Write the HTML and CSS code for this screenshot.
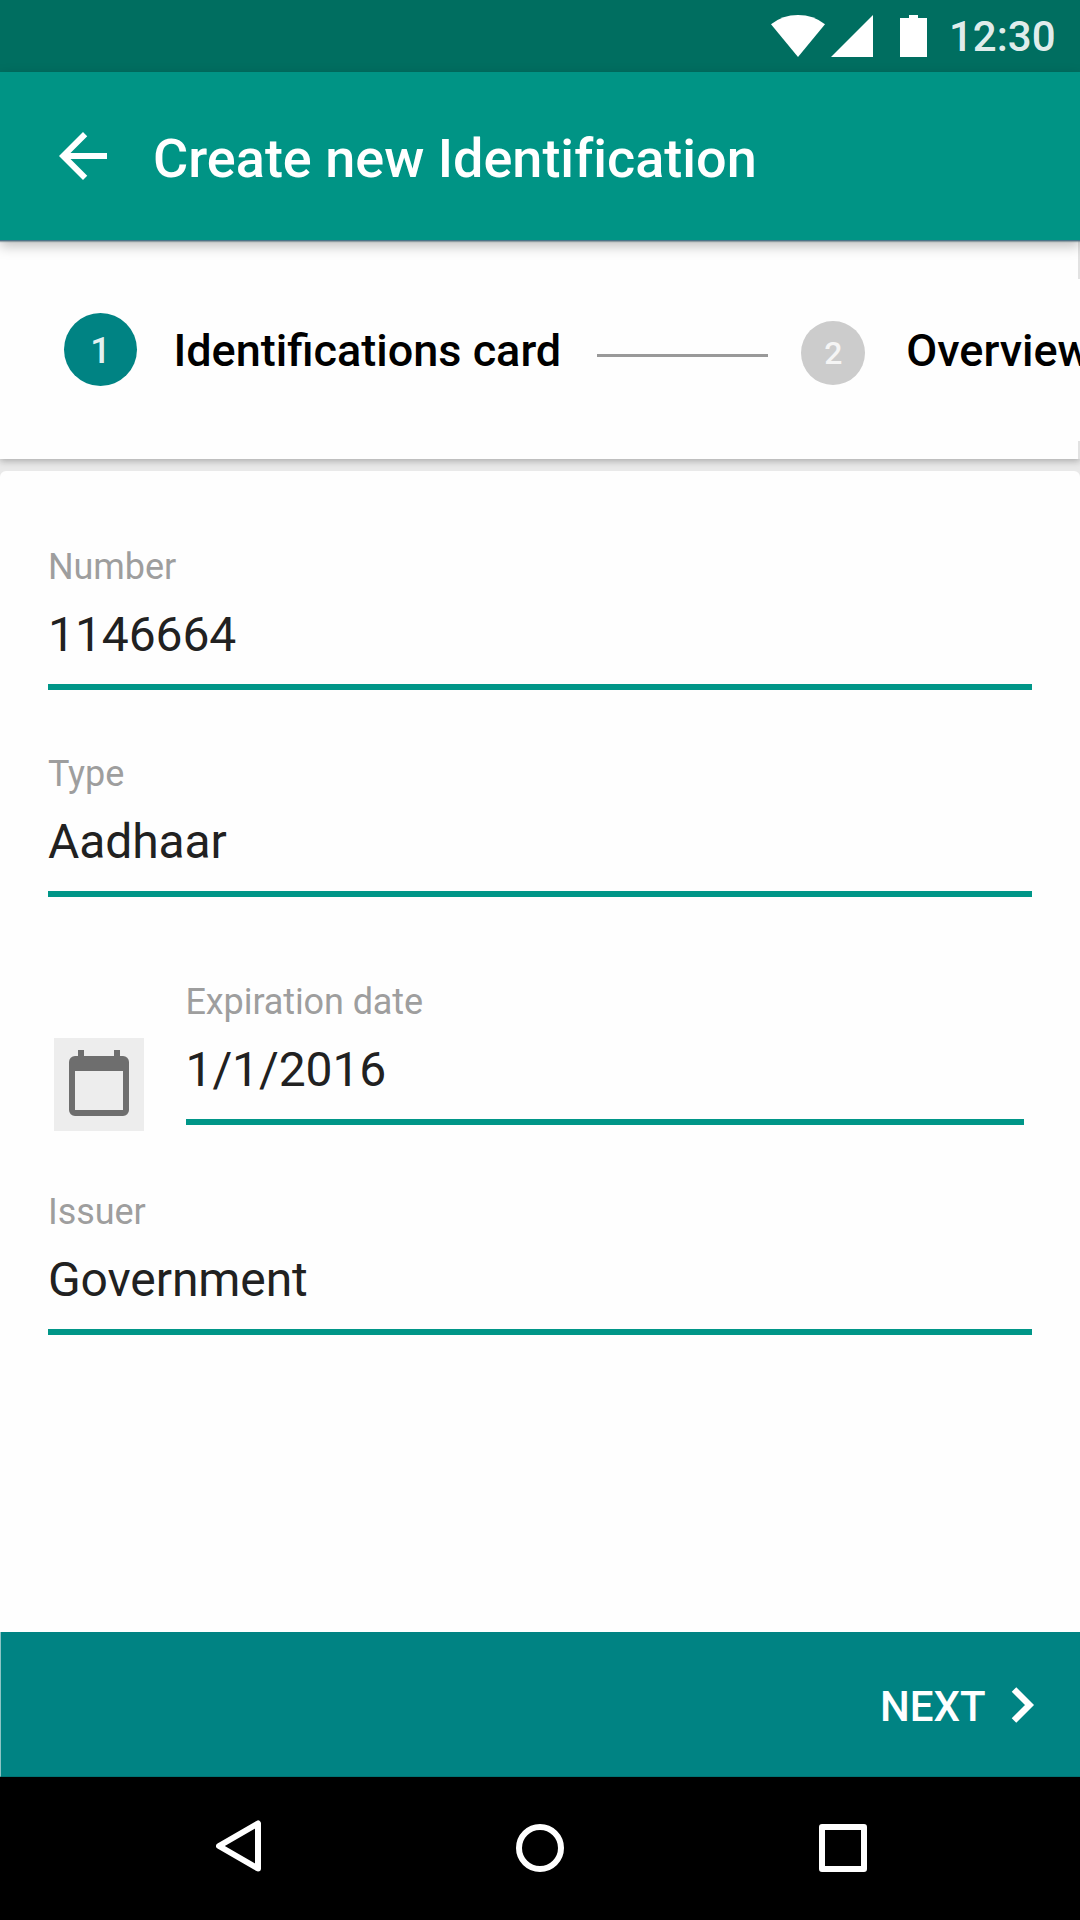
FILE: index.html
```html
<!DOCTYPE html>
<html lang="en">
<head>
<meta charset="utf-8">
<title>Create new Identification</title>
<link rel="stylesheet" href="styles.css">
</head>
<body>
<div class="screen">
  <div class="status-bar">
    <svg class="status-icons" width="156" height="42" viewBox="0 0 156 42" fill="#fff">
      <path d="M0 9.3Q11.5 0 27 0T54 9.3L27 42z"/>
      <path d="M60 42h42V0z"/>
      <path d="M129 3h9V0h9v3h9v39h-27z"/>
    </svg>
    <span class="clock">12:30</span>
  </div>

  <header class="app-bar">
    <svg class="back" width="72" height="72" viewBox="0 0 24 24" fill="#fff">
      <path d="M20 11H7.83l5.59-5.59L12 4l-8 8 8 8 1.41-1.41L7.83 13H20z"/>
    </svg>
    <h1 class="title">Create new Identification</h1>
  </header>

  <nav class="stepper">
    <span class="step-dot active">1</span>
    <span class="step-name">Identifications card</span>
    <span class="step-line"></span>
    <span class="step-dot">2</span>
    <span class="step-name next-name">Overview</span>
  </nav>

  <main class="form">
    <div class="field">
      <label class="label">Number</label>
      <div class="value">1146664</div>
    </div>
    <div class="field">
      <label class="label">Type</label>
      <div class="value">Aadhaar</div>
    </div>
    <div class="date-row">
      <div class="calendar">
        <svg width="60" height="66" viewBox="0 0 60 66" fill="#6e6e6e">
          <path fill-rule="evenodd" d="M9 0h6v6h30V0h6v6h3a6 6 0 0 1 6 6v48a6 6 0 0 1-6 6H6a6 6 0 0 1-6-6V12a6 6 0 0 1 6-6h3zM6 21v39h48V21z"/>
        </svg>
      </div>
      <div class="field">
        <label class="label">Expiration date</label>
        <div class="value">1/1/2016</div>
      </div>
    </div>
    <div class="field">
      <label class="label">Issuer</label>
      <div class="value">Government</div>
    </div>
  </main>

  <footer class="actions">
    <span class="next">NEXT</span>
    <svg width="24" height="38" viewBox="0 0 24 38" fill="none" stroke="#fff" stroke-width="6.4">
      <path d="M3 3.5 18.5 19 3 34.5"/>
    </svg>
  </footer>

  <div class="system-nav">
    <svg class="nav-back" width="48" height="54" viewBox="0 0 48 54" fill="none" stroke="#fff" stroke-width="6" stroke-linejoin="round">
      <path d="M3 27 42 4.5v45z"/>
    </svg>
    <svg width="48" height="48" viewBox="0 0 48 48" fill="none" stroke="#fff" stroke-width="6">
      <circle cx="24" cy="24" r="21"/>
    </svg>
    <svg width="48" height="48" viewBox="0 0 48 48" fill="none" stroke="#fff" stroke-width="6" stroke-linejoin="round">
      <path d="M3 3h42v42H3z"/>
    </svg>
  </div>
</div>
</body>
</html>
```
FILE: styles.css
```css
* {
  box-sizing: border-box;
}

body {
  margin: 0;
  font-family: Roboto, sans-serif;
}

.screen {
  display: flex;
  flex-direction: column;
  width: 1080px;
  height: 1920px;
  overflow: hidden;
  background: #e9e9e9;
}

.status-bar {
  display: flex;
  align-items: flex-start;
  flex: none;
  height: 72px;
  padding: 15px 0 0 771px;
  background: #006e60;
}

.clock {
  margin-left: 22px;
  font-size: 42px;
  font-weight: 500;
  line-height: 44px;
  color: rgba(255, 255, 255, 0.9);
}

.app-bar {
  position: relative;
  z-index: 1;
  display: flex;
  align-items: center;
  flex: none;
  height: 169px;
  padding-left: 47px;
  background: #009485;
  border-bottom: 1px solid #4a7488;
  box-shadow: 0 1px 1px rgba(80, 110, 120, 0.5), 0 5px 12px rgba(0, 0, 0, 0.25);
}

.title {
  margin: 5px 0 0 34px;
  font-size: 54px;
  font-weight: 500;
  font-variant-ligatures: none;
  line-height: 64px;
  white-space: nowrap;
  color: #fff;
}

.stepper {
  position: relative;
  display: flex;
  align-items: center;
  flex: none;
  height: 218px;
  padding-left: 64px;
  background: #fefefe;
  box-shadow: 0 2px 7px rgba(0, 0, 0, 0.28);
}

/* faint card edges on the right, above and below the step labels */
.stepper::after {
  content: "";
  position: absolute;
  top: 0;
  right: 0;
  width: 2px;
  height: 100%;
  background: linear-gradient(#e2e2e2 38px, transparent 38px, transparent 200px, #e2e2e2 200px);
}

.step-dot {
  display: flex;
  align-items: center;
  justify-content: center;
  flex: none;
  width: 64px;
  height: 64px;
  margin: 5px 0 0 33px;
  border-radius: 50%;
  background: #ccc;
  font-size: 32px;
  font-weight: 500;
  color: #f5f5f5;
}

.step-dot.active {
  width: 73px;
  height: 73px;
  margin: -1px 0 0;
  padding-top: 2px;
  background: #008383;
  font-size: 36px;
  color: #e3f1f1;
}

.step-name {
  flex: none;
  margin: 2px 0 0 36.5px;
  font-size: 45px;
  font-weight: 500;
  line-height: 54px;
  white-space: nowrap;
  color: #000;
}

.step-name.next-name {
  margin-left: 41px;
}

.step-line {
  flex: none;
  width: 171px;
  height: 3px;
  margin: 11px 0 0 36px;
  background: #999;
}

.form {
  display: flex;
  flex-direction: column;
  flex: none;
  height: 1161px;
  margin-top: 12px;
  padding: 71px 48px 0;
  border-radius: 6px 6px 0 0;
  background: #fefefe;
}

.field {
  height: 148px;
  margin-bottom: 59px;
  border-bottom: 6px solid #009688;
}

.label {
  display: block;
  padding-top: 2px;
  font-size: 36px;
  line-height: 46px;
  letter-spacing: -0.1px;
  color: #9e9e9e;
}

.value {
  margin-top: 17px;
  font-size: 48px;
  line-height: 56px;
  letter-spacing: -0.1px;
  color: #212121;
}

.date-row {
  display: flex;
  margin-top: 21px;
}

.date-row .field {
  width: 838px;
  margin: 0 0 62px 41.5px;
}

.calendar {
  display: flex;
  justify-content: center;
  width: 90px;
  height: 93px;
  margin: 61px 0 0 6px;
  padding-top: 12px;
  background: #ededed;
}

.actions {
  display: flex;
  align-items: center;
  flex: none;
  height: 145px;
  padding-left: 879px;
  background: #008383;
  border-bottom: 1px solid #007373;
  border-left: 1px solid #8cc4c4;
}

.actions svg {
  margin-top: 1px;
}

.next {
  margin: 5px 25px 0 0;
  font-size: 42px;
  font-weight: 500;
  line-height: 50px;
  color: #fff;
}

.system-nav {
  display: flex;
  align-items: flex-start;
  justify-content: space-between;
  flex: 1;
  padding: 47px 213px 0 216px;
  background: #000;
}

.nav-back {
  margin: -5px -3px 0 0;
}
```
